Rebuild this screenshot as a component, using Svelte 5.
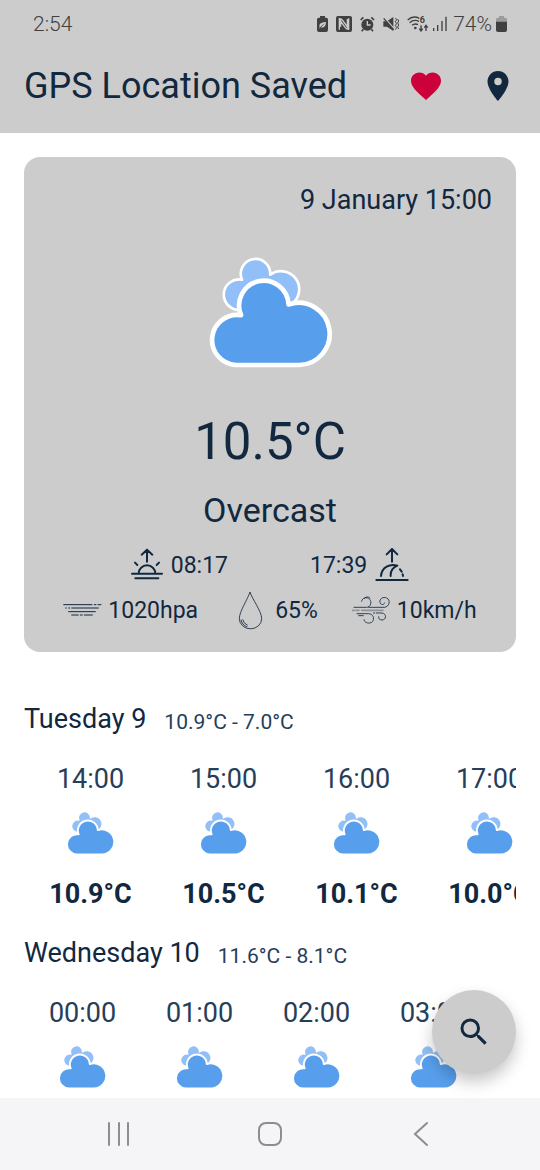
<script>
  const days = [
    {
      name: 'Tuesday 9',
      range: '10.9°C - 7.0°C',
      hours: [
        { time: '14:00', temp: '10.9°C' },
        { time: '15:00', temp: '10.5°C' },
        { time: '16:00', temp: '10.1°C' },
        { time: '17:00', temp: '10.0°C' }
      ]
    },
    {
      name: 'Wednesday 10',
      range: '11.6°C - 8.1°C',
      compact: true,
      hours: [{ time: '00:00' }, { time: '01:00' }, { time: '02:00' }, { time: '03:00' }]
    }
  ];
</script>

{#snippet cloud()}
  <svg class="cloud" viewBox="50 50 380 335" aria-hidden="true">
    <path
      d="M148 208A45.5 45.5 0 1 1 155 118A44 44 0 1 1 239 103A54 54 0 0 1 304 190L262 206Z"
      fill="#92bff8" stroke="#fff" stroke-width="8" stroke-linejoin="round" />
    <path
      d="M137 373A75 75 0 1 1 152 224A74 74 0 1 1 294 192A93 93 0 1 1 326 373Z"
      fill="#579fec" stroke="#fff" stroke-width="14" stroke-linejoin="round" />
  </svg>
{/snippet}

<div class="app">
  <header>
    <div class="status">
      <span class="clock">2:54</span>
      <div class="indicators">
        <svg width="11" height="16" viewBox="0 0 33 48" aria-hidden="true">
          <path d="M9 0h15v5h4q5 0 5 5v32q0 6-6 6H6q-6 0-6-6V10q0-5 5-5h4z" fill="#404040" />
          <path d="M8 33c-3-9 3-14 19-15 0 13-8 19-16 16l-4 4" fill="#ccc" />
          <path d="M9 35l11-10" stroke="#404040" stroke-width="2.5" />
        </svg>
        <svg width="16" height="16" viewBox="0 0 48 48" aria-hidden="true">
          <rect width="48" height="48" rx="6" fill="#404040" />
          <path d="M10 41V8c5 0 7 1 10 5l14 20V9M14 8v24M38 7v33c-5 0-7-1-10-5L15 17" fill="none" stroke="#ccc" stroke-width="4" />
        </svg>
        <svg width="15" height="16" viewBox="0 0 45 48" aria-hidden="true">
          <circle cx="22" cy="26" r="18" fill="#404040" />
          <path d="M2 12l8-8M42 12l-8-8M10 40l-5 6M34 40l5 6" stroke="#404040" stroke-width="5" />
          <path d="M22 15v12h10" fill="none" stroke="#ccc" stroke-width="4" />
        </svg>
        <svg width="16" height="16" viewBox="0 0 48 48" aria-hidden="true">
          <path d="M1 16h11L31 3v42L12 32H1z" fill="#404040" />
          <path d="M0 1l34 38" stroke="#ccc" stroke-width="5" />
          <path d="M2 7l30 34" stroke="#404040" stroke-width="4" />
          <path d="M37 6l4 5-4 6 4 6-4 6 4 6-4 6M44 9l3 6-3 6 3 6-3 6 3 6" fill="none" stroke="#404040" stroke-width="3" />
        </svg>
        <svg class="wifi" width="22" height="16" viewBox="0 0 66 48" aria-hidden="true">
          <path d="M2 12Q18-3 37 7M8 20Q20 9 36 16M15 28Q24 21 33 26" fill="none" stroke="#404040" stroke-width="4" />
          <circle cx="25" cy="36" r="4" fill="#404040" />
          <path d="M42 28v16m-5-6l5 7 5-7M57 45V29m-5 6l5-7 5 7" fill="none" stroke="#404040" stroke-width="4" />
          <text x="38" y="20" font-size="27" font-weight="700" fill="#404040">6</text>
        </svg>
        <svg class="signal" width="14" height="16" viewBox="0 0 42 48" aria-hidden="true">
          <path d="M2 36v9M14 27v18M27 15v30M39 2v43" stroke="#404040" stroke-width="4" />
        </svg>
        <span class="percent">74%</span>
        <svg width="11" height="16" viewBox="0 0 33 48" aria-hidden="true">
          <path d="M9 0h15v5h4q5 0 5 5v8H0v-8q0-5 5-5h4z" fill="#9b9b9b" />
          <path d="M0 17h33v25q0 6-6 6H6q-6 0-6-6z" fill="#404040" />
        </svg>
      </div>
    </div>
    <div class="appbar">
      <h1>GPS Location Saved</h1>
      <div class="actions">
        <button aria-label="Favourite">
          <svg width="36" height="36" viewBox="0 0 24 24">
            <path fill="#cc003a" d="M12 21.35l-1.45-1.32C5.4 15.36 2 12.28 2 8.5 2 5.42 4.42 3 7.5 3c1.74 0 3.41.81 4.5 2.09C13.09 3.81 14.76 3 16.5 3 19.58 3 22 5.42 22 8.5c0 3.78-3.4 6.86-8.55 11.54L12 21.35z" />
          </svg>
        </button>
        <button aria-label="Locations">
          <svg width="36" height="36" viewBox="0 0 24 24">
            <path fill="#12283f" d="M12 2C8.13 2 5 5.13 5 9c0 5.25 7 13 7 13s7-7.75 7-13c0-3.87-3.13-7-7-7zm0 9.5a2.5 2.5 0 0 1 0-5 2.5 2.5 0 0 1 0 5z" />
          </svg>
        </button>
      </div>
    </div>
  </header>

  <main>
    <section class="card">
      <p class="date">9 January 15:00</p>
      {@render cloud()}
      <p class="now">10.5°C</p>
      <p class="condition">Overcast</p>
      <div class="sun">
        <div class="metric rise">
          <svg width="32" height="34" viewBox="0 0 96 102" fill="none" stroke="#12283f" stroke-width="6" stroke-linecap="round" stroke-linejoin="round" aria-hidden="true">
            <path d="M48 41V6M32 20L48 5l16 15M3 77h90M13 91h69M23 76a25 24 0 0 1 50 0M12 44l7 7M84 44l-7 7" />
          </svg>
          <span>08:17</span>
        </div>
        <div class="metric set">
          <span>17:39</span>
          <svg width="34" height="34" viewBox="0 0 102 102" fill="none" stroke="#12283f" stroke-width="6" stroke-linecap="round" stroke-linejoin="round" aria-hidden="true">
            <path d="M51 41V4M35 19L51 3l16 16M4 96h94M18 84C20 57 45 46 67 53C53 59 46 69 47 84M75 64l5 7M83 79l1 5" />
          </svg>
        </div>
      </div>
      <div class="readings">
        <div class="metric pressure">
          <svg width="39" height="14" viewBox="0 0 117 42" stroke="#12283f" stroke-width="3" stroke-linecap="round" aria-hidden="true">
            <path d="M2 5h85M94 5h5M105 5h9M8 15h2M17 15h3M26 15h80M17 26h80M26 36h20M52 36h6M64 36h24" />
          </svg>
          <span>1020hpa</span>
        </div>
        <div class="metric humidity">
          <svg width="25" height="39" viewBox="0 0 75 117" fill="none" stroke="#12283f" stroke-width="2.5" aria-hidden="true">
            <path d="M36 3C29 25 4 61 4 83a33 30 0 0 0 67 0C71 61 43 25 36 3ZM9 86q2 15 19 22M14 85q2 12 15 18" />
          </svg>
          <span>65%</span>
        </div>
        <div class="metric wind">
          <svg width="39" height="28" viewBox="0 0 117 84" fill="none" stroke="#12283f" stroke-width="2.5" stroke-linecap="round" aria-hidden="true">
            <path d="M6 34h37c14 0 17-17 10-24-8-9-23-5-24 6M36 8c4-6 13-7 18-2M50 34h47c15-1 20-22 7-28-10-5-23 3-20 13 1 8 12 9 14 2" />
            <path d="M2 43h5M12 43h9M29 43h64" stroke="#8c959e" stroke-width="5" />
            <path d="M15 53h34c20 0 20 27 4 28-10 1-18-5-17-10M20 59h14M64 51h4M73 51h17c15 2 13 21 0 21-8 0-11-5-10-10" />
          </svg>
          <span>10km/h</span>
        </div>
      </div>
    </section>

    {#each days as day}
      <section class="day">
        <div class="heading">
          <h2>{day.name}</h2>
          <span>{day.range}</span>
        </div>
        <ul class:compact={day.compact}>
          {#each day.hours as hour}
            <li>
              <span class="time">{hour.time}</span>
              {@render cloud()}
              {#if hour.temp}<strong>{hour.temp}</strong>{/if}
            </li>
          {/each}
        </ul>
      </section>
    {/each}
  </main>

  <button class="search" aria-label="Search">
    <svg width="36" height="36" viewBox="0 0 24 24">
      <path fill="#12283f" d="M15.5 14h-.79l-.28-.27A6.47 6.47 0 0 0 16 9.5 6.5 6.5 0 1 0 9.5 16c1.61 0 3.09-.59 4.23-1.57l.27.28v.79l5 4.99L20.49 19l-4.99-5zm-6 0C7.01 14 5 11.99 5 9.5S7.01 5 9.5 5 14 7.01 14 9.5 11.99 14 9.5 14z" />
    </svg>
  </button>

  <nav>
    <button aria-label="Recent apps">
      <svg width="26" height="26" viewBox="0 0 26 26"><path d="M3 2v22M13 2v22M22 2v22" stroke="#8d8d8f" stroke-width="2" stroke-linecap="round" /></svg>
    </button>
    <button aria-label="Home">
      <svg width="26" height="26" viewBox="0 0 26 26"><rect x="2" y="2" width="22" height="22" rx="7" fill="none" stroke="#8d8d8f" stroke-width="2" /></svg>
    </button>
    <button aria-label="Back">
      <svg width="26" height="26" viewBox="0 0 26 26"><path d="M19 2L7 13l12 11" fill="none" stroke="#8d8d8f" stroke-width="2" stroke-linecap="round" /></svg>
    </button>
  </nav>
</div>

<style>
  :global(body) {
    margin: 0;
    background: #fff;
  }
  .app {
    position: relative;
    display: flex;
    flex-direction: column;
    min-height: 100vh;
    color: #12283f;
    font-family: Roboto, sans-serif;
  }
  h1, h2, p, ul {
    margin: 0;
    padding: 0;
    font-weight: 400;
  }
  svg {
    display: block;
    flex: none;
  }
  button {
    display: flex;
    align-items: center;
    justify-content: center;
    padding: 0;
    border: 0;
    background: none;
    cursor: pointer;
  }
  header {
    padding-bottom: 9px;
    background: #ccc;
  }
  .status {
    display: flex;
    align-items: center;
    justify-content: space-between;
    height: 48px;
    padding: 0 33px;
    color: #404040;
    font-size: 21px;
    font-weight: 300;
  }
  .indicators {
    display: flex;
    align-items: center;
    gap: 8px;
  }
  .signal {
    margin-left: -4px;
  }
  .percent {
    margin: 0 -4px 0 -2px;
  }
  .appbar {
    display: flex;
    align-items: center;
    justify-content: space-between;
    height: 76px;
    padding: 0 24px;
  }
  h1 {
    font-size: 36px;
    line-height: 44px;
  }
  .actions {
    display: flex;
    gap: 36px;
  }
  main {
    flex: 1;
    padding: 24px 24px 8px;
    overflow: hidden;
  }
  .card {
    display: flex;
    flex-direction: column;
    align-items: center;
    padding: 24px 24px 19px;
    border-radius: 16px;
    background: #ccc;
  }
  .date {
    align-self: flex-end;
    font-size: 27px;
    line-height: 38px;
  }
  .card .cloud {
    width: 127px;
    height: 112px;
    margin-top: 38px;
  }
  .now {
    margin-top: 45px;
    font-size: 51px;
    line-height: 56px;
  }
  .condition {
    margin-top: 18px;
    font-size: 34px;
    line-height: 44px;
  }
  .sun, .readings, .metric {
    display: flex;
    align-items: center;
    justify-content: center;
  }
  .metric {
    gap: 8px;
    font-size: 23px;
  }
  .sun {
    gap: 82px;
    height: 44px;
    margin-top: 11px;
  }
  .readings {
    gap: 34px;
    height: 46px;
  }
  .readings .metric {
    gap: 6px;
  }
  .readings .humidity {
    gap: 12px;
    padding-left: 6px;
  }
  .day {
    padding-top: 21px;
  }
  .card + .day {
    padding-top: 47px;
  }
  .heading {
    display: flex;
    align-items: center;
    gap: 18px;
    height: 40px;
  }
  h2 {
    font-size: 27px;
  }
  .heading span {
    padding-top: 6px;
    font-size: 21px;
    color: #263e59;
  }
  ul {
    display: flex;
    margin-top: 22px;
    overflow: hidden;
    list-style: none;
  }
  li {
    display: flex;
    flex: 0 0 133px;
    flex-direction: column;
    align-items: center;
    font-size: 27px;
    line-height: 36px;
  }
  .compact li {
    flex-basis: 117px;
  }
  .time {
    color: #263e59;
  }
  li .cloud {
    width: 51px;
    height: 45px;
    margin-top: 14px;
  }
  strong {
    margin-top: 20px;
    font-weight: 700;
  }
  .search {
    position: absolute;
    right: 24px;
    bottom: 96px;
    width: 84px;
    height: 84px;
    border-radius: 50%;
    background: #ccc;
    box-shadow: 0 8px 16px rgba(0, 0, 0, 0.22);
  }
  nav {
    position: relative;
    display: flex;
    align-items: center;
    justify-content: center;
    gap: 125px;
    height: 72px;
    background: #f5f5f7;
  }
</style>
